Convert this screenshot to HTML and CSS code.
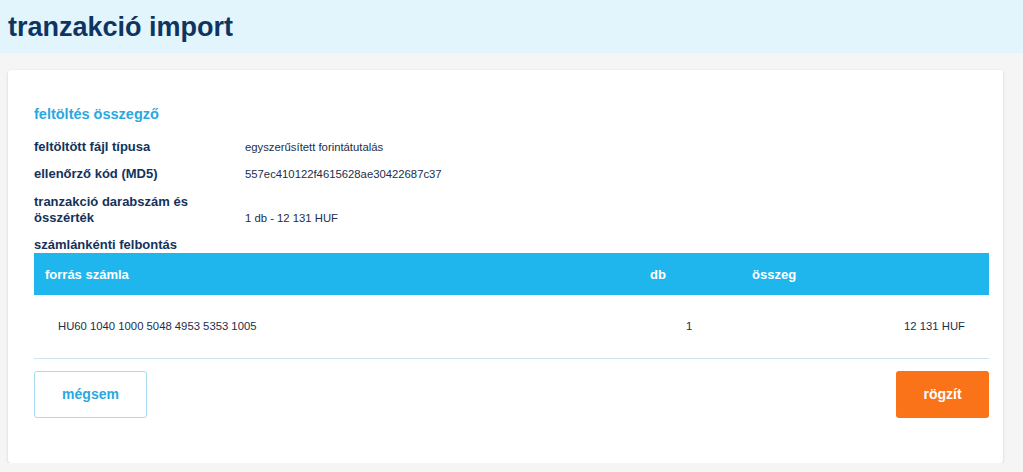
FILE: index.html
```html
<!DOCTYPE html>
<html lang="hu">
<head>
    <meta charset="UTF-8">
    <title>tranzakció import</title>
    <link rel="stylesheet" href="styles.css">
</head>
<body>
    <header class="page-head">
        <h1>tranzakció import</h1>
    </header>

    <main class="card">
        <h2 class="section-title">feltöltés összegző</h2>

        <dl class="summary">
            <div class="summary-row">
                <dt>feltöltött fájl típusa</dt>
                <dd>egyszerűsített forintátutalás</dd>
            </div>
            <div class="summary-row">
                <dt>ellenőrző kód (MD5)</dt>
                <dd>557ec410122f4615628ae30422687c37</dd>
            </div>
            <div class="summary-row tall">
                <dt>tranzakció darabszám és összérték</dt>
                <dd>1 db - 12 131 HUF</dd>
            </div>
        </dl>

        <div class="breakdown-label">számlánkénti felbontás</div>
        <table class="accounts">
            <thead>
                <tr>
                    <th class="col-account">forrás számla</th>
                    <th class="col-count">db</th>
                    <th class="col-sum">összeg</th>
                </tr>
            </thead>
            <tbody>
                <tr>
                    <td class="col-account">HU60 1040 1000 5048 4953 5353 1005</td>
                    <td class="col-count">1</td>
                    <td class="col-sum">12 131 HUF</td>
                </tr>
            </tbody>
        </table>

        <div class="actions">
            <button class="btn btn-secondary">mégsem</button>
            <button class="btn btn-primary">rögzít</button>
        </div>
    </main>
</body>
</html>
```

FILE: styles.css
```css
body {
    margin: 0;
    background-color: #f5f5f5;
    font-family: "Liberation Sans", Arial, sans-serif;
    color: #13325b;
}
.page-head {
    background-color: #e2f4fc;
    height: 53px;
    padding: 0 8px;
}
.page-head h1 {
    margin: 0;
    font-size: 27px;
    line-height: 54px;
    color: #0e3462;
    font-weight: bold;
}
.card {
    margin: 17px 20px 0 8px;
    background: white;
    border-radius: 3px;
    box-shadow: 0 1px 3px rgba(0,0,0,0.15);
    padding: 36px 14px 45px 26px;
}
.section-title {
    margin: 0 0 10px 0;
    font-size: 14.5px;
    color: #2aa8df;
    font-weight: bold;
}
.summary {
    margin: 0;
}
.summary-row {
    display: flex;
    align-items: flex-end;
    min-height: 27px;
}
.summary-row dt {
    width: 211px;
    font-size: 13px;
    font-weight: bold;
    line-height: 16px;
    padding-bottom: 4px;
}
.summary-row dd {
    margin: 0;
    font-size: 11.3px;
    color: #1b2e4a;
    line-height: 16px;
    padding-bottom: 4px;
}
.summary-row.tall dt {
    width: 170px;
    margin-right: 41px;
    padding-top: 8px;
}
.breakdown-label {
    font-size: 13px;
    font-weight: bold;
    line-height: 16px;
    margin-top: 7px;
}
.accounts {
    width: 100%;
    border-collapse: collapse;
    table-layout: fixed;
}
.accounts th,
.accounts td {
    box-sizing: border-box;
}
.accounts th {
    background-color: #1fb6ed;
    color: white;
    font-size: 13px;
    font-weight: bold;
    text-align: left;
    height: 42px;
    padding: 0 11px;
}
.accounts td {
    height: 63px;
    font-size: 11.3px;
    color: #1b2e4a;
    border-bottom: 1px solid #cce4ef;
    padding: 0 24px;
}
.accounts .col-account {
    width: 605px;
}
.accounts .col-count {
    width: 102px;
}
.accounts td.col-count {
    padding-left: 47px;
}
.accounts td.col-sum {
    text-align: right;
}
.actions {
    display: flex;
    justify-content: space-between;
    margin-top: 12px;
}
.btn {
    height: 47px;
    border-radius: 3px;
    font-family: "Liberation Sans", Arial, sans-serif;
    font-size: 14px;
    font-weight: bold;
    cursor: pointer;
}
.btn-secondary {
    width: 113px;
    background: white;
    border: 1px solid #a8dbf1;
    color: #2aa8df;
}
.btn-primary {
    width: 93px;
    background-color: #fa7319;
    border: none;
    color: white;
}
```
